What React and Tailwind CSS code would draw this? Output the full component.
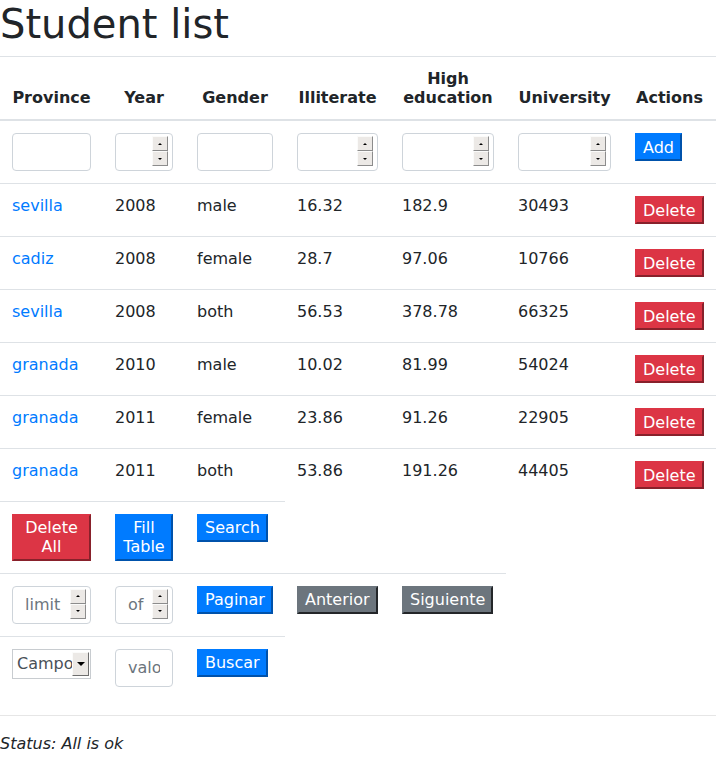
import React from "react";

const rows = [
  ["sevilla", "2008", "male", "16.32", "182.9", "30493"],
  ["cadiz", "2008", "female", "28.7", "97.06", "10766"],
  ["sevilla", "2008", "both", "56.53", "378.78", "66325"],
  ["granada", "2010", "male", "10.02", "81.99", "54024"],
  ["granada", "2011", "female", "23.86", "91.26", "22905"],
  ["granada", "2011", "both", "53.86", "191.26", "44405"],
];

const btnBase =
  "text-white text-[16px] leading-[19px] px-[6px] py-[2.5px] border-2 border-solid align-top";
const red =
  "bg-[#dc3545] border-t-[#dc3545] border-l-[#dc3545] border-r-[#88212b] border-b-[#88212b]";
const blue =
  "bg-[#007bff] border-t-[#007bff] border-l-[#007bff] border-r-[#0052ab] border-b-[#0052ab]";
const gray =
  "bg-[#6c757d] border-t-[#6c757d] border-l-[#6c757d] border-r-[#232629] border-b-[#232629]";

function Btn({ variant, className = "", children }) {
  const v = variant === "red" ? red : variant === "gray" ? gray : blue;
  return <button className={`${btnBase} ${v} ${className}`}>{children}</button>;
}

function SpinHalf({ up }) {
  return (
    <div className="h-[15px] bg-[#ece9e6] border border-t-[#fbfbfa] border-l-[#fbfbfa] border-r-[#8c8c8c] border-b-[#8c8c8c] flex items-center justify-center">
      {up ? (
        <span className="w-0 h-0 border-x-[2px] border-x-transparent border-b-[2px] border-b-black" />
      ) : (
        <span className="w-0 h-0 border-x-[2px] border-x-transparent border-t-[2px] border-t-black" />
      )}
    </div>
  );
}

function Spinner() {
  return (
    <div className="absolute right-[5px] top-[3px] w-[16px] h-[30px] flex flex-col">
      <SpinHalf up />
      <SpinHalf />
    </div>
  );
}

function Field({ spin, placeholder }) {
  return (
    <div className="relative w-full">
      <input
        type="text"
        placeholder={placeholder}
        className={`block w-full h-[38px] border border-[#ced4da] rounded-[4px] bg-white pl-[12px] ${
          spin ? "pr-[24px]" : "pr-[12px]"
        } py-[6px] text-[16px] leading-[24px] text-[#495057] placeholder:text-[#6c757d] outline-none`}
      />
      {spin && <Spinner />}
    </div>
  );
}

function Select() {
  return (
    <div className="w-full h-[30px] border border-[#c8ccd0] bg-white flex items-stretch py-[2px] pr-[1px]">
      <div className="flex-1 overflow-hidden whitespace-nowrap pl-[4px] pt-[2.5px] text-[#495057]">
        Campo
      </div>
      <div className="w-[17px] shrink-0 bg-[#ece9e6] border border-t-[#fbfbfa] border-l-[#fbfbfa] border-r-[#6e6e6e] border-b-[#6e6e6e] flex items-center justify-center">
        <span className="w-0 h-0 border-x-[4px] border-x-transparent border-t-[4px] border-t-black" />
      </div>
    </div>
  );
}

const th =
  "px-[12px] py-[12px] align-bottom text-center font-bold border-t border-b-2 border-[#dee2e6]";
const td = "p-[12px] align-top border-t border-[#dee2e6]";

export default function App() {
  return (
    <div className="font-['DejaVu_Sans',sans-serif] text-[16px] leading-[19px] text-[#212529] bg-white min-h-[764px]">
      <h1 className="text-[40px] leading-[48px] font-normal mb-[8px]">Student list</h1>
      <table className="w-full table-fixed border-collapse">
        <colgroup>
          <col className="w-[103px]" />
          <col className="w-[82px]" />
          <col className="w-[100px]" />
          <col className="w-[105px]" />
          <col className="w-[116px]" />
          <col className="w-[117px]" />
          <col className="w-[93px]" />
        </colgroup>
        <thead>
          <tr>
            <th className={th}>Province</th>
            <th className={th}>Year</th>
            <th className={th}>Gender</th>
            <th className={th}>Illiterate</th>
            <th className={th}>High education</th>
            <th className={th}>University</th>
            <th className={th}>Actions</th>
          </tr>
        </thead>
        <tbody>
          <tr>
            <td className={td}><Field /></td>
            <td className={td}><Field spin /></td>
            <td className={td}><Field /></td>
            <td className={td}><Field spin /></td>
            <td className={td}><Field spin /></td>
            <td className={td}><Field spin /></td>
            <td className={td}><Btn variant="blue">Add</Btn></td>
          </tr>
          {rows.map((r, i) => (
            <tr key={i}>
              <td className={td}>
                <a className="text-[#007bff]">{r[0]}</a>
              </td>
              <td className={td}>{r[1]}</td>
              <td className={td}>{r[2]}</td>
              <td className={td}>{r[3]}</td>
              <td className={td}>{r[4]}</td>
              <td className={td}>{r[5]}</td>
              <td className={td}><Btn variant="red">Delete</Btn></td>
            </tr>
          ))}
          <tr>
            <td className={td}><Btn variant="red" className="w-full">Delete All</Btn></td>
            <td className={td}><Btn variant="blue" className="w-full">Fill Table</Btn></td>
            <td className={td}><Btn variant="blue">Search</Btn></td>
          </tr>
          <tr>
            <td className={td}><Field spin placeholder="limit" /></td>
            <td className={td}><Field spin placeholder="of" /></td>
            <td className={td}><Btn variant="blue">Paginar</Btn></td>
            <td className={td}><Btn variant="gray">Anterior</Btn></td>
            <td className={td}><Btn variant="gray">Siguiente</Btn></td>
          </tr>
          <tr>
            <td className={td}><Select /></td>
            <td className={td}><Field placeholder="valor" /></td>
            <td className={td}><Btn variant="blue">Buscar</Btn></td>
          </tr>
        </tbody>
      </table>
      <hr className="mt-[16px] mb-[16px] border-t border-[#e6e6e6]" />
      <p className="italic leading-[24px]">Status: All is ok</p>
    </div>
  );
}
